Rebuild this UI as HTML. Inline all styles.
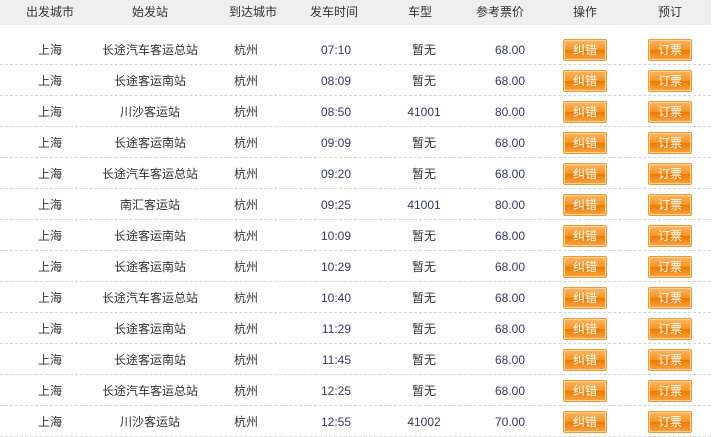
<!DOCTYPE html>
<html><head><meta charset="utf-8"><style>
body{margin:0;background:#fff;width:719px;height:436px;overflow:hidden;font-family:"Liberation Sans","Noto Sans CJK SC",sans-serif;font-size:12px;color:#333}
.h{position:absolute;left:0;top:0;width:711px;height:25px;background:#efefef}
.c{position:absolute;white-space:nowrap}
.row{position:absolute;left:0;width:711px;height:30px;border-bottom:1px dashed #d4d4d4}
.t{position:absolute;top:1px;line-height:30px;transform:translateX(-50%);white-space:nowrap}
.r{position:absolute;top:1px;line-height:30px;text-align:right}
.n{color:#333a66}
.b{position:absolute;top:5px;width:42px;height:20px;border:1px solid #f29a30;border-radius:2px;background:linear-gradient(#fbb766 0%,#f7931e 50%,#ec7a00 51%,#f9a443 100%);color:#fff;text-align:center;line-height:20px;font-size:12px;box-shadow:inset 0 0 0 1px #ffd29a}
</style></head><body>
<div class="h">
<span class="c t" style="left:50px;line-height:25px;top:0">出发城市</span>
<span class="c t" style="left:150px;line-height:25px;top:0">始发站</span>
<span class="c t" style="left:253px;line-height:25px;top:0">到达城市</span>
<span class="c t" style="left:334px;line-height:25px;top:0">发车时间</span>
<span class="c t" style="left:420px;line-height:25px;top:0">车型</span>
<span class="c t" style="left:500px;line-height:25px;top:0">参考票价</span>
<span class="c t" style="left:585px;line-height:25px;top:0">操作</span>
<span class="c t" style="left:670px;line-height:25px;top:0">预订</span>
</div>
<div id="rows"></div>
<script>
var d=[["长途汽车客运总站","07:10","暂无","68.00"],["长途客运南站","08:09","暂无","68.00"],["川沙客运站","08:50","41001","80.00"],["长途客运南站","09:09","暂无","68.00"],["长途汽车客运总站","09:20","暂无","68.00"],["南汇客运站","09:25","41001","80.00"],["长途客运南站","10:09","暂无","68.00"],["长途客运南站","10:29","暂无","68.00"],["长途汽车客运总站","10:40","暂无","68.00"],["长途客运南站","11:29","暂无","68.00"],["长途客运南站","11:45","暂无","68.00"],["长途汽车客运总站","12:25","暂无","68.00"],["川沙客运站","12:55","41002","70.00"]];
var h="";
d.forEach(function(r,i){
h+='<div class="row" style="top:'+(34+31*i)+'px">'+
'<span class="t" style="left:50px">上海</span>'+
'<span class="t" style="left:150px">'+r[0]+'</span>'+
'<span class="t" style="left:246px">杭州</span>'+
'<span class="r n" style="left:300px;width:51px">'+r[1]+'</span>'+
'<span class="t '+(r[2]=="暂无"?'':'n')+'" style="left:424px">'+r[2]+'</span>'+
'<span class="r n" style="left:460px;width:65px">'+r[3]+'</span>'+
'<span class="b" style="left:563px">纠错</span>'+
'<span class="b" style="left:648px">订票</span></div>';
});
document.getElementById("rows").innerHTML=h;
</script>
</body></html>
